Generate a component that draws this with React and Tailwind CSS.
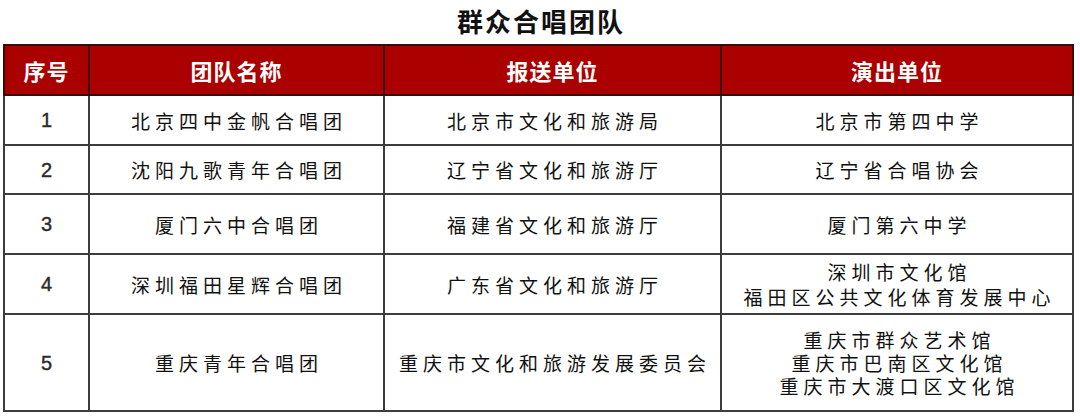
import React from "react";

const rows = [
  { n: "1", name: "北京四中金帆合唱团", org: "北京市文化和旅游局", perf: ["北京市第四中学"], h: "h-[50px]" },
  { n: "2", name: "沈阳九歌青年合唱团", org: "辽宁省文化和旅游厅", perf: ["辽宁省合唱协会"], h: "h-[49px]" },
  { n: "3", name: "厦门六中合唱团", org: "福建省文化和旅游厅", perf: ["厦门第六中学"], h: "h-[60px]" },
  { n: "4", name: "深圳福田星辉合唱团", org: "广东省文化和旅游厅", perf: ["深圳市文化馆", "福田区公共文化体育发展中心"], h: "h-[60px]" },
  { n: "5", name: "重庆青年合唱团", org: "重庆市文化和旅游发展委员会", perf: ["重庆市群众艺术馆", "重庆市巴南区文化馆", "重庆市大渡口区文化馆"], h: "h-[97px]" },
];

const cjk = { fontFamily: '"Noto Sans CJK SC", "Noto Sans", sans-serif' };

export default function App() {
  return (
    <div className="w-[1080px] h-[420px] bg-white relative" style={cjk}>
      <div className="h-[44px] flex items-center justify-center">
        <div className="text-[26px] font-bold text-[#111] tracking-[2px] leading-none pl-[2px] -mt-[2px]">群众合唱团队</div>
      </div>
      <table className="ml-[3px] w-[1069px] border-collapse table-fixed">
        <colgroup>
          <col className="w-[85px]" />
          <col className="w-[295px]" />
          <col className="w-[337px]" />
          <col className="w-[352px]" />
        </colgroup>
        <thead>
          <tr className="h-[50px] bg-[#aa0000]">
            {["序号", "团队名称", "报送单位", "演出单位"].map((t) => (
              <th key={t} className="border-2 border-[#3a0a0a] text-white text-[22px] font-bold leading-none tracking-[1px] p-0 text-center">
                {t}
              </th>
            ))}
          </tr>
        </thead>
        <tbody>
          {rows.map((r) => (
            <tr key={r.n} className={r.h}>
              <td className="border-2 border-[#3c3c3c] text-center p-0 text-[20px] text-[#2a2a2a]" style={{ fontFamily: '"Liberation Sans", Arial, sans-serif', WebkitTextStroke: "0.4px #2a2a2a" }}>
                {r.n}
              </td>
              <td className="border-2 border-[#3c3c3c] text-center p-0 pl-[5px] text-[19px] tracking-[5px] text-[#111] leading-none">
                {r.name}
              </td>
              <td className="border-2 border-[#3c3c3c] text-center p-0 pl-[5px] text-[19px] tracking-[5px] text-[#111] leading-none">
                {r.org}
              </td>
              <td className="border-2 border-[#3c3c3c] text-center p-0 pl-[5px] text-[19px] tracking-[5px] text-[#111]">
                <div className={r.perf.length === 3 ? "leading-[23px]" : "leading-[25px]"}>
                  {r.perf.map((p) => (
                    <div key={p}>{p}</div>
                  ))}
                </div>
              </td>
            </tr>
          ))}
        </tbody>
      </table>
    </div>
  );
}
